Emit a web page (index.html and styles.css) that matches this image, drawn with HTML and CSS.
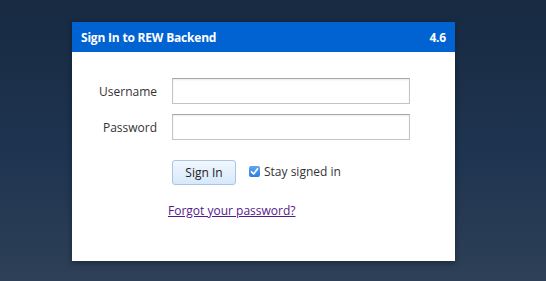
FILE: index.html
```html
<!DOCTYPE html>
<html lang="en">
<head>
  <meta charset="UTF-8" />
  <title>Sign In to REW Backend</title>
  <link rel="stylesheet" href="styles.css">
</head>
<body>
  <div class="dialogo">
    <div class="cabecera">
      <span class="titulo">Sign In to REW Backend</span>
      <span class="version">4.6</span>
    </div>
    <form class="formulario">
      <label class="etiqueta" for="usuario">Username</label>
      <input class="campo" id="usuario" type="text" />
      <label class="etiqueta" for="clave">Password</label>
      <input class="campo" id="clave" type="password" />
      <div class="acciones">
        <button class="boton" type="button">Sign In</button>
        <label class="recordar">
          <span class="casilla">
            <svg width="9" height="9" viewBox="0 0 9 9"><path d="M1.5 4.8 L3.6 7 L7.6 1.8" fill="none" stroke="#fff" stroke-width="1.7" stroke-linecap="round" stroke-linejoin="round"/></svg>
          </span>
          Stay signed in
        </label>
      </div>
      <a class="olvido" href="#">Forgot your password?</a>
    </form>
  </div>
</body>
</html>
```

FILE: styles.css
```css
html {
  height: 100%;
}

body {
  margin: 0;
  height: 100%;
  padding: 22px 0 0 72px;
  box-sizing: border-box;
  background: linear-gradient(180deg, #172a42 0%, #1f3450 55%, #2d4057 100%);
  font-family: 'Open Sans', sans-serif;
  color: #333;
  overflow: hidden;
}

.dialogo {
  width: 383px;
  height: 239px;
  background: #fff;
  box-shadow: 0 2px 6px rgba(0, 0, 0, 0.35);
}

.cabecera {
  height: 30px;
  background: #0063d1;
  color: #fff;
  display: flex;
  align-items: center;
  justify-content: space-between;
  padding: 0 9px 0 9px;
  font-size: 12px;
  font-weight: 700;
  letter-spacing: -0.2px;
}

.formulario {
  display: grid;
  grid-template-columns: 85px 238px;
  column-gap: 15px;
  row-gap: 10px;
  padding-top: 26px;
  align-items: center;
  margin: 0;
}

.etiqueta {
  text-align: right;
  font-size: 12px;
  color: #333;
}

.campo {
  height: 26px;
  box-sizing: border-box;
  border: 1px solid #c4c4c4;
  border-top-color: #a6a6a6;
  box-shadow: inset 0 1px 2px rgba(0, 0, 0, 0.08);
  margin: 0;
  padding: 2px 4px;
}

.acciones {
  grid-column: 2;
  display: flex;
  align-items: center;
  margin-top: 10px;
}

.boton {
  width: 64px;
  height: 25px;
  font-family: 'Open Sans', sans-serif;
  font-size: 12px;
  color: #222;
  border: 1px solid #aac4e2;
  border-radius: 3px;
  background: linear-gradient(180deg, #f1f7fe 0%, #d7e8fb 100%);
  padding: 0;
}

.recordar {
  display: flex;
  align-items: center;
  margin-left: 13px;
  margin-top: -2px;
  font-size: 12px;
  color: #333;
}

.casilla {
  width: 11px;
  height: 11px;
  border-radius: 2px;
  background: linear-gradient(180deg, #5fa6f3, #2f7de0);
  display: flex;
  align-items: center;
  justify-content: center;
  margin-right: 4px;
}

.olvido {
  grid-column: 2;
  margin: 7px 0 0 -4px;
  font-size: 12px;
  color: #551a8b;
}
```
